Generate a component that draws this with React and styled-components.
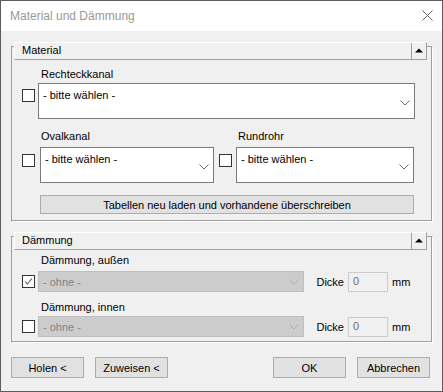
import React from "react"
import styled, { createGlobalStyle } from "styled-components"

const Global = createGlobalStyle`
    html, body { margin: 0; padding: 0; background: #f0f0f0; }
    * { box-sizing: border-box; }
`;

const Window = styled.div`
    width: 443px;
    height: 392px;
    border: 1px solid #5c5c5c;
    background: #f0f0f0;
    display: flex;
    flex-direction: column;
    font-family: "Liberation Sans", Arial, sans-serif;
    font-size: 11px;
    color: #000;`;

const TitleBar = styled.div`
    height: 30px;
    background: #fff;
    display: flex;
    align-items: center;
    justify-content: space-between;
    padding: 0 9px 0 9px;`;

const TitleText = styled.div`
    font-size: 12px;
    color: #999;
    padding-bottom: 1px;`;

const CloseIcon = styled.svg`
    width: 11px;
    height: 11px;
    margin-bottom: 1px;`;

const Body = styled.div`
    flex: 1;
    display: flex;
    flex-direction: column;
    padding: 15px 9px 0 10px;`;

const Group = styled.div`
    border-top: 1px solid #a0a0a0;
    border-left: 1px solid #a0a0a0;
    border-right: 1px solid #fff;
    border-bottom: 1px solid #fff;
    box-shadow: inset -1px -1px 0 #a0a0a0;
    margin-top: ${p => p.gap || 0}px;
    padding-bottom: ${p => p.bottom || 0}px;`;

const GroupHeader = styled.div`
    height: 18px;
    margin: -5px 5px 0 2px;
    display: flex;
    background: #f0f0f0;
    border-top: 1px solid #fff;
    border-left: 1px solid #fff;
    border-bottom: 1px solid #a0a0a0;
    border-right: 1px solid #a0a0a0;
    position: relative;`;

const HeaderTitle = styled.div`
    flex: 1;
    padding-left: 7px;
    line-height: 15px;`;

const CollapseButton = styled.div`
    width: 15px;
    border-left: 1px solid #a0a0a0;
    display: flex;
    align-items: center;
    justify-content: center;
    padding-bottom: 1px;`;

const Tick = styled.div`
    position: absolute;
    right: -5px;
    top: 3px;
    width: 4px;
    height: 1px;
    background: #a0a0a0;`;

const Content = styled.div`
    padding: 0 18px 0 10px;`;

const FieldLabel = styled.div`
    line-height: 13px;
    margin: ${p => p.top || 0}px 0 0 19px;`;

const FieldRow = styled.div`
    display: flex;
    align-items: ${p => p.center ? "center" : "flex-start"};
    margin-top: ${p => p.top || 0}px;`;

const CheckBox = styled.div`
    width: 13px;
    height: 13px;
    flex: none;
    border: 1px solid #333;
    background: #fff;
    margin-top: ${p => p.offset || 0}px;
    margin-right: ${p => p.space || 3}px;
    display: flex;
    align-items: center;
    justify-content: center;`;

const Combo = styled.div`
    flex: 1;
    height: ${p => p.tall ? 36 : 21}px;
    margin-right: ${p => p.pull || 0}px;
    border: 1px solid ${p => p.disabled ? "#bfbfbf" : "#7a7a7a"};
    background: ${p => p.disabled ? "#cccccc" : "#fff"};
    color: ${p => p.disabled ? "#838383" : "#000"};
    display: flex;
    align-items: ${p => p.tall ? "flex-start" : "center"};
    padding: ${p => p.tall ? "5px 4px 0 4px" : "0 4px"};`;

const ComboText = styled.div`
    flex: 1;
    white-space: nowrap;`;

const Chevron = styled.svg`
    width: 10px;
    height: 6px;
    margin-top: ${p => p.drop || 0}px;`;

const Columns = styled.div`
    display: grid;
    grid-template-columns: 192px 1fr;
    column-gap: 5px;
    margin-top: 11px;`;

const WideButton = styled.div`
    height: 19px;
    margin: 12px 0 0 18px;
    background: #e1e1e1;
    border: 1px solid #adadad;
    display: flex;
    align-items: center;
    justify-content: center;`;

const SideLabel = styled.div`
    margin: 0 4px 0 12px;
    white-space: nowrap;`;

const ThicknessInput = styled.div`
    width: 40px;
    height: 20px;
    border: 1px solid #cccccc;
    background: #f0f0f0;
    color: #6d6d6d;
    padding: 2px 0 0 4px;`;

const Unit = styled.div`
    margin-left: 4px;
    width: 22px;`;

const Footer = styled.div`
    display: flex;
    gap: 11px;
    margin-top: 14px;
    padding-right: 3px;`;

const DialogButton = styled.div`
    width: 73px;
    height: 21px;
    background: #e1e1e1;
    border: 1px solid #adadad;
    display: flex;
    align-items: center;
    justify-content: center;
    margin-left: ${p => p.push ? "auto" : "0"};`;

const Down = ({ disabled, drop }) => (
    <Chevron viewBox="0 0 10 6" drop={drop}>
        <polyline points="0.5,0.5 5,5 9.5,0.5" fill="none" stroke={disabled ? "#adadad" : "#6a6a6a"} strokeWidth="1" />
    </Chevron>
);

const Header = ({ title }) => (
    <GroupHeader>
        <HeaderTitle>{title}</HeaderTitle>
        <CollapseButton>
            <svg width="8" height="5" viewBox="0 0 8 5">
                <polygon points="0,4.5 4,0.5 8,4.5" fill="#000" />
            </svg>
        </CollapseButton>
        <Tick />
    </GroupHeader>
);

const Checked = () => (
    <CheckBox offset={0}>
        <svg width="9" height="9" viewBox="0 0 9 9">
            <polyline points="1,4.5 3.3,7 8,1.5" fill="none" stroke="#555" strokeWidth="1.1" />
        </svg>
    </CheckBox>
);

const InsulationRow = ({ checked, top }) => (
    <FieldRow center top={top}>
        {checked ? <Checked /> : <CheckBox />}
        <Combo disabled>
            <ComboText>- ohne -</ComboText>
            <Down disabled />
        </Combo>
        <SideLabel>Dicke</SideLabel>
        <ThicknessInput>0</ThicknessInput>
        <Unit>mm</Unit>
    </FieldRow>
);

const App = () => {
    return (
        <>
            <Global />
            <Window>
                <TitleBar>
                    <TitleText>Material und Dämmung</TitleText>
                    <CloseIcon viewBox="0 0 11 11">
                        <path d="M0.5 0.5 L10.5 10.5 M10.5 0.5 L0.5 10.5" stroke="#666" strokeWidth="1" fill="none" />
                    </CloseIcon>
                </TitleBar>
                <Body>
                    <Group bottom={7}>
                        <Header title="Material" />
                        <Content>
                            <FieldLabel top={8}>Rechteckkanal</FieldLabel>
                            <FieldRow top={2}>
                                <CheckBox offset={6}/>
                                <Combo tall pull={-1}>
                                    <ComboText>- bitte wählen -</ComboText>
                                    <Down drop={11} />
                                </Combo>
                            </FieldRow>
                            <Columns>
                                <div>
                                    <FieldLabel>Ovalkanal</FieldLabel>
                                    <FieldRow top={4}>
                                        <CheckBox offset={7} space={5}/>
                                        <Combo tall>
                                            <ComboText>- bitte wählen -</ComboText>
                                            <Down drop={11} />
                                        </Combo>
                                    </FieldRow>
                                </div>
                                <div>
                                    <FieldLabel>Rundrohr</FieldLabel>
                                    <FieldRow top={4}>
                                        <CheckBox offset={7} space={4}/>
                                        <Combo tall>
                                            <ComboText>- bitte wählen -</ComboText>
                                            <Down drop={11} />
                                        </Combo>
                                    </FieldRow>
                                </div>
                            </Columns>
                            <WideButton>Tabellen neu laden und vorhandene überschreiben</WideButton>
                        </Content>
                    </Group>
                    <Group gap={14} bottom={5}>
                        <Header title="Dämmung" />
                        <Content>
                            <FieldLabel top={4}>Dämmung, außen</FieldLabel>
                            <InsulationRow checked top={4} />
                            <FieldLabel top={9}>Dämmung, innen</FieldLabel>
                            <InsulationRow top={2} />
                        </Content>
                    </Group>
                    <Footer>
                        <DialogButton>Holen &lt;</DialogButton>
                        <DialogButton>Zuweisen &lt;</DialogButton>
                        <DialogButton push>OK</DialogButton>
                        <DialogButton>Abbrechen</DialogButton>
                    </Footer>
                </Body>
            </Window>
        </>
    )
}

export default App
